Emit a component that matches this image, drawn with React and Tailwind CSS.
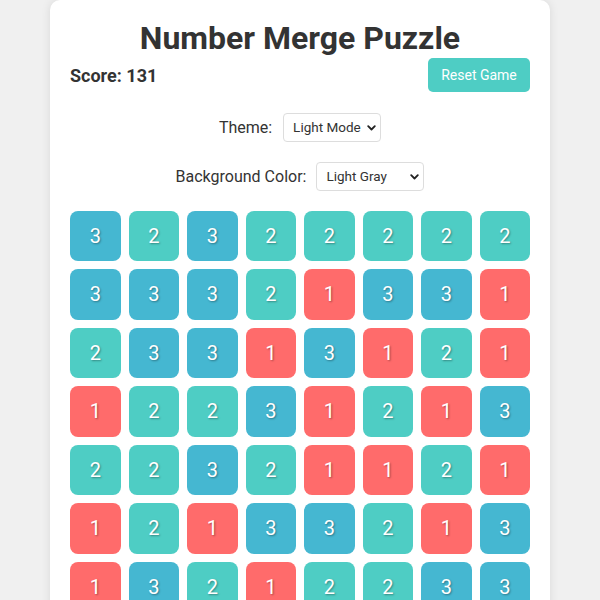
import React from "react";

const grid = [
  [3, 2, 3, 2, 2, 2, 2, 2],
  [3, 3, 3, 2, 1, 3, 3, 1],
  [2, 3, 3, 1, 3, 1, 2, 1],
  [1, 2, 2, 3, 1, 2, 1, 3],
  [2, 2, 3, 2, 1, 1, 2, 1],
  [1, 2, 1, 3, 3, 2, 1, 3],
  [1, 3, 2, 1, 2, 2, 3, 3],
  [2, 1, 3, 2, 1, 3, 2, 1],
];

const colors = {
  1: "bg-[#ff6b6b]",
  2: "bg-[#4ecdc4]",
  3: "bg-[#45b7d1]",
};

function Chevron() {
  return (
    <svg width="9" height="6" viewBox="0 0 9 6" className="shrink-0">
      <path d="M1.2 1.2 L4.5 4.5 L7.8 1.2" fill="none" stroke="#222" strokeWidth="1.8" strokeLinecap="round" strokeLinejoin="round" />
    </svg>
  );
}

function Select({ value, width }) {
  return (
    <div
      className={`flex h-[29px] items-center justify-between rounded-[4px] border border-[#ddd] bg-white pl-[9px] pr-[4px] text-[13.5px] text-[#333] ${width}`}
    >
      <span>{value}</span>
      <Chevron />
    </div>
  );
}

export default function App() {
  return (
    <div className="min-h-screen bg-[#f0f0f0] font-['Roboto',sans-serif] text-[#333]">
      <div className="mx-auto w-[500px] rounded-[10px] bg-white p-[20px] shadow-[0_0_10px_rgba(0,0,0,0.1)]">
        <h1 className="text-center text-[32px] font-bold leading-[37.5px] text-[#333]">
          Number Merge Puzzle
        </h1>
        <div className="flex h-[34px] items-center justify-between">
          <div className="mt-[1px] text-[18px] font-bold">Score: 131</div>
          <button className="h-[34px] w-[102px] rounded-[5px] bg-[#4ecdc4] pt-[1px] text-[14px] text-white">
            Reset Game
          </button>
        </div>
        <div className="mt-[22px] flex h-[28px] items-center justify-center gap-[11px] text-[16px]">
          <span>Theme:</span>
          <Select value="Light Mode" width="w-[98px]" />
        </div>
        <div className="mt-[21px] flex h-[28px] items-center justify-center gap-[10px] text-[16px]">
          <span>Background Color:</span>
          <Select value="Light Gray" width="w-[108px]" />
        </div>
        <div className="mt-[20px] grid grid-cols-8 gap-[8px]">
          {grid.flat().map((v, i) => (
            <div
              key={i}
              className={`flex aspect-square items-center justify-center rounded-[8px] text-[20px] text-white [text-shadow:1px_1px_2px_rgba(0,0,0,0.35)] ${colors[v]}`}
            >
              {v}
            </div>
          ))}
        </div>
      </div>
    </div>
  );
}
